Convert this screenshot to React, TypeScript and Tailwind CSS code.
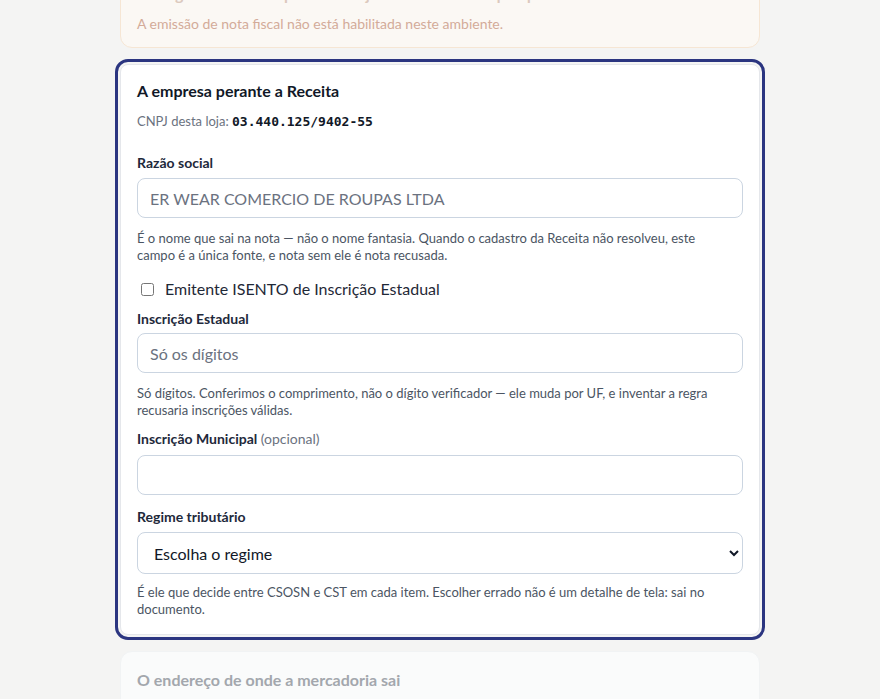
import { useState } from "react";

const font = { fontFamily: "Lato, 'Noto Sans', sans-serif" };

function Help({ children, className = "mt-3" }: { children: React.ReactNode; className?: string }) {
  return <p className={`${className} text-[13px] leading-[17px] text-[#4b5563]`}>{children}</p>;
}

export default function App() {
  const [isento, setIsento] = useState(false);

  return (
    <div style={font} className="min-h-[699px] bg-[#f4f4f3] overflow-hidden">
      <main className="mx-auto w-[640px] space-y-4 pb-10">
        {/* aviso */}
        <section className="-mt-[35px] rounded-xl border border-[#f6e6d4] bg-[#fbf8f4] px-4 pt-4 pb-[13px]">
          <h2 className="text-base font-bold leading-6 text-[#dcc9be]">
            Configure a emissão para esta loja antes de emitir qualquer documento fiscal
          </h2>
          <p className="mt-2 text-sm leading-5 text-[#d3ab99]">
            A emissão de nota fiscal não está habilitada neste ambiente.
          </p>
        </section>

        {/* empresa */}
        <section className="rounded-lg border border-[#e5e7eb] bg-white px-4 pt-[14px] pb-4 outline-3 outline-offset-[2px] outline-[#2b3580]">
          <h2 className="text-base font-bold leading-6 text-[#111827]">A empresa perante a Receita</h2>
          <p className="mt-2 text-[13px] leading-5 text-[#6b7280]">
            CNPJ desta loja:{" "}
            <span className="font-bold text-[#111827]" style={{ fontFamily: "'DejaVu Sans Mono', monospace" }}>
              03.440.125/9402-55
            </span>
          </p>

          <div className="mt-[21px]">
            <label className="block text-sm font-bold leading-5 text-[#1e293b]">Razão social</label>
            <input
              className="mt-[5px] block h-10 w-full rounded-lg border border-[#cbd5e1] bg-white px-3 text-base text-[#111827] placeholder:text-[#6b7280]"
              placeholder="ER WEAR COMERCIO DE ROUPAS LTDA"
            />
            <Help>
              É o nome que sai na nota — não o nome fantasia. Quando o cadastro da Receita não resolveu, este
              <br />
              campo é a única fonte, e nota sem ele é nota recusada.
            </Help>
          </div>

          <label className="mt-[13px] flex items-center gap-[11px] text-base leading-6 text-[#1f2937]">
            <input
              type="checkbox"
              className="ml-1 h-[13px] w-[13px]"
              checked={isento}
              onChange={(e) => setIsento(e.target.checked)}
            />
            Emitente ISENTO de Inscrição Estadual
          </label>

          <div className="mt-2">
            <label className="block text-sm font-bold leading-5 text-[#1e293b]">Inscrição Estadual</label>
            <input
              className="mt-1 block h-10 w-full rounded-lg border border-[#cbd5e1] bg-white px-3 text-base placeholder:text-[#6b7280]"
              placeholder="Só os dígitos"
            />
            <Help>
              Só dígitos. Conferimos o comprimento, não o dígito verificador — ele muda por UF, e inventar a regra
              recusaria inscrições válidas.
            </Help>
          </div>

          <div className="mt-[10px]">
            <label className="block text-sm font-bold leading-5 text-[#1e293b]">
              Inscrição Municipal <span className="font-normal text-[#6b7280]">(opcional)</span>
            </label>
            <input className="mt-1.5 block h-10 w-full rounded-lg border border-[#cbd5e1] bg-white px-3 text-base" />
          </div>

          <div className="mt-3">
            <label className="block text-sm font-bold leading-5 text-[#1e293b]">Regime tributário</label>
            <select className="mt-[5px] block h-[42px] w-full rounded-lg border border-[#cbd5e1] bg-white px-3 text-base text-[#111827]">
              <option>Escolha o regime</option>
              <option>Simples Nacional</option>
              <option>Lucro Presumido</option>
              <option>Lucro Real</option>
            </select>
            <Help className="mt-[10px]">
              É ele que decide entre CSOSN e CST em cada item. Escolher errado não é um detalhe de tela: sai no
              documento.
            </Help>
          </div>
        </section>

        {/* endereço */}
        <section className="rounded-xl border border-[#f1f3f4] bg-[#fafbfb] px-4 pt-4 pb-6">
          <h2 className="text-base font-bold leading-6 text-[#a3a7ad]">O endereço de onde a mercadoria sai</h2>
        </section>
      </main>
    </div>
  );
}
